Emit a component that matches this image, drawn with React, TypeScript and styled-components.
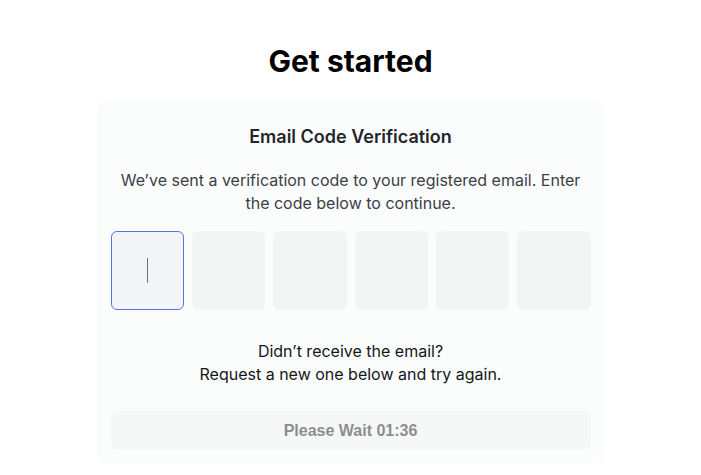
import styled, { createGlobalStyle } from "styled-components";

const GlobalStyle = createGlobalStyle`
  html, body {
    margin: 0;
    padding: 0;
    background: #ffffff;
  }
  body {
    font-family: Inter, "Noto Sans", sans-serif;
    color: #1a1c1e;
  }
`;

const Page = styled.main`
  display: flex;
  flex-direction: column;
  align-items: center;
  padding-top: 43px;
`;

const Title = styled.h1`
  margin: 0 0 21px;
  font-size: 30px;
  line-height: 36px;
  font-weight: 700;
  color: #000000;
`;

const Card = styled.section`
  box-sizing: border-box;
  width: 508px;
  padding: 25px 14px 14px;
  border-radius: 10px;
  background: #fbfdfd;
  display: flex;
  flex-direction: column;
  align-items: center;
`;

const Heading = styled.h2`
  margin: 0;
  font-size: 18px;
  line-height: 24px;
  font-weight: 600;
  color: #23262a;
`;

const Description = styled.p`
  margin: 20px 0 0;
  max-width: 470px;
  font-size: 16px;
  line-height: 23px;
  text-align: center;
  color: #3b4046;
`;

const CodeRow = styled.div`
  margin-top: 16px;
  width: 100%;
  display: grid;
  grid-template-columns: repeat(6, 1fr);
  gap: 8px;
`;

const CodeBox = styled.div<{ $active?: boolean }>`
  box-sizing: border-box;
  height: 79px;
  border-radius: 6px;
  background: ${({ $active }) => ($active ? "#f3f4f6" : "#f3f5f5")};
  border: 1px solid ${({ $active }) => ($active ? "#5b72dc" : "transparent")};
  display: flex;
  align-items: center;
  justify-content: center;
`;

const Caret = styled.span`
  width: 1px;
  height: 25px;
  background: #6f7276;
`;

const Hint = styled.p`
  margin: 30px 0 0;
  font-size: 16px;
  line-height: 23px;
  text-align: center;
  color: #141618;
`;

const WaitButton = styled.button`
  margin-top: 25px;
  width: 100%;
  height: 39px;
  border: none;
  border-radius: 6px;
  background: #f6f8f8;
  color: #8b8e91;
  font-family: "Liberation Sans", Arial, sans-serif;
  font-size: 16px;
  font-weight: 700;
  cursor: not-allowed;
`;

export default function App() {
  const digits = [0, 1, 2, 3, 4, 5];

  return (
    <>
      <GlobalStyle />
      <Page>
        <Title>Get started</Title>
        <Card>
          <Heading>Email Code Verification</Heading>
          <Description>
            We’ve sent a verification code to your registered email. Enter the
            code below to continue.
          </Description>
          <CodeRow>
            {digits.map((i) => (
              <CodeBox key={i} $active={i === 0}>
                {i === 0 && <Caret />}
              </CodeBox>
            ))}
          </CodeRow>
          <Hint>
            Didn’t receive the email?
            <br />
            Request a new one below and try again.
          </Hint>
          <WaitButton disabled>Please Wait 01:36</WaitButton>
        </Card>
      </Page>
    </>
  );
}
